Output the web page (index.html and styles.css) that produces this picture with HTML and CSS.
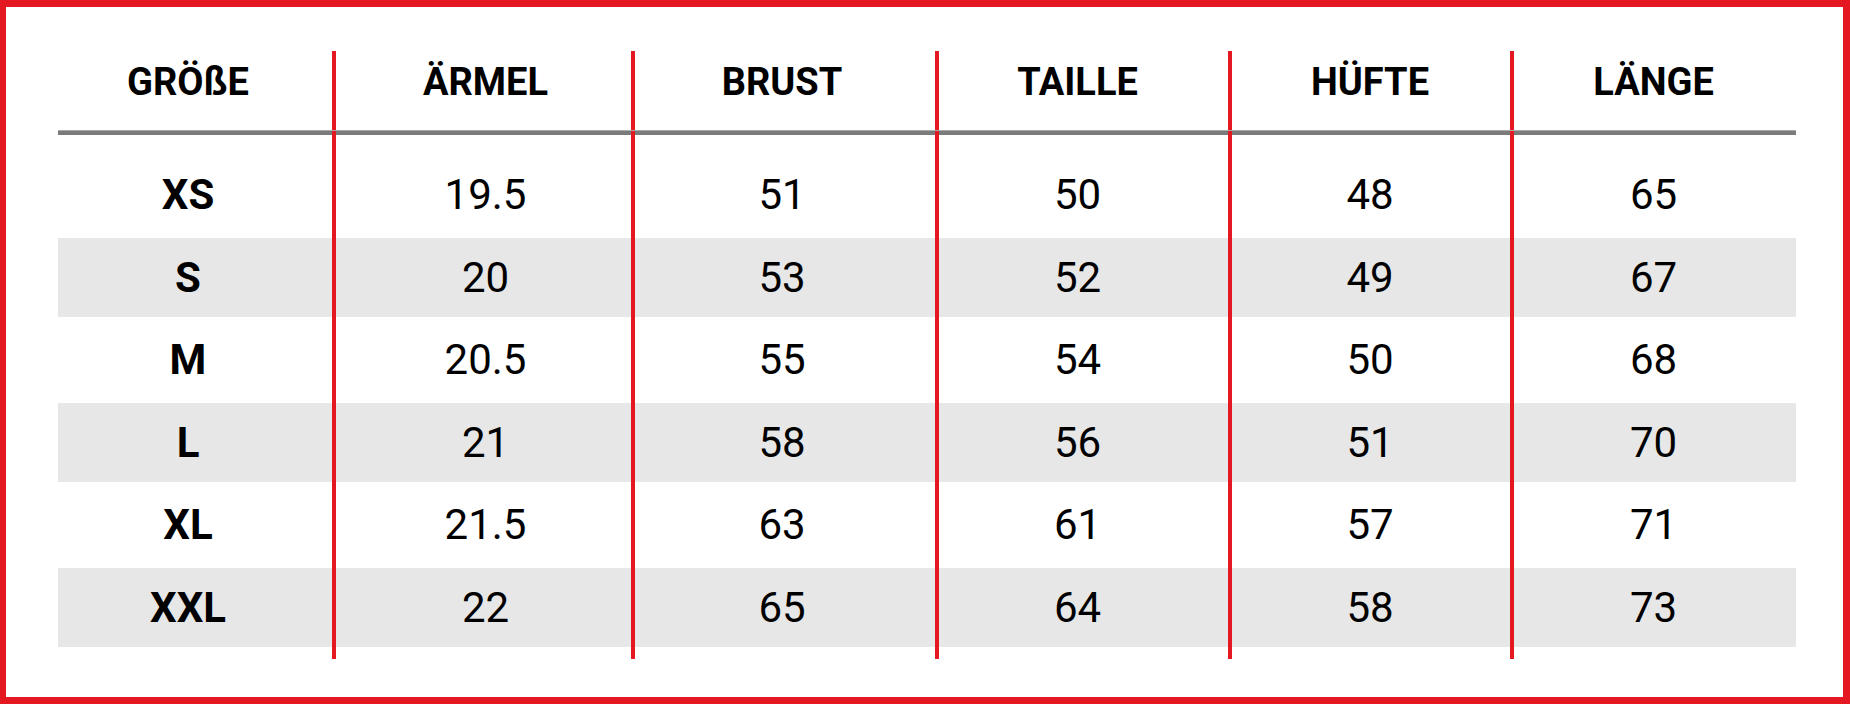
FILE: index.html
```html
<!DOCTYPE html>
<html lang="de">
<head>
<meta charset="utf-8">
<title>Größentabelle</title>
<link rel="stylesheet" href="styles.css">
</head>
<body>
<div class="frame">
  <div class="chart">
    <div class="row head">
      <div class="cell c1">GRÖßE</div>
      <div class="cell c2">ÄRMEL</div>
      <div class="cell c3">BRUST</div>
      <div class="cell c4">TAILLE</div>
      <div class="cell c5">HÜFTE</div>
      <div class="cell c6">LÄNGE</div>
    </div>
    <div class="row rule">
      <div class="cell c1"></div><div class="cell c2"></div><div class="cell c3"></div><div class="cell c4"></div><div class="cell c5"></div><div class="cell c6"></div>
    </div>
    <div class="row gap-top">
      <div class="cell c1"></div><div class="cell c2"></div><div class="cell c3"></div><div class="cell c4"></div><div class="cell c5"></div><div class="cell c6"></div>
    </div>
    <div class="row data">
      <div class="cell c1 size">XS</div><div class="cell c2">19.5</div><div class="cell c3">51</div><div class="cell c4">50</div><div class="cell c5">48</div><div class="cell c6">65</div>
    </div>
    <div class="row data alt">
      <div class="cell c1 size">S</div><div class="cell c2">20</div><div class="cell c3">53</div><div class="cell c4">52</div><div class="cell c5">49</div><div class="cell c6">67</div>
    </div>
    <div class="row data">
      <div class="cell c1 size">M</div><div class="cell c2">20.5</div><div class="cell c3">55</div><div class="cell c4">54</div><div class="cell c5">50</div><div class="cell c6">68</div>
    </div>
    <div class="row data alt">
      <div class="cell c1 size">L</div><div class="cell c2">21</div><div class="cell c3">58</div><div class="cell c4">56</div><div class="cell c5">51</div><div class="cell c6">70</div>
    </div>
    <div class="row data">
      <div class="cell c1 size">XL</div><div class="cell c2">21.5</div><div class="cell c3">63</div><div class="cell c4">61</div><div class="cell c5">57</div><div class="cell c6">71</div>
    </div>
    <div class="row data alt">
      <div class="cell c1 size">XXL</div><div class="cell c2">22</div><div class="cell c3">65</div><div class="cell c4">64</div><div class="cell c5">58</div><div class="cell c6">73</div>
    </div>
    <div class="row gap-bottom">
      <div class="cell c1"></div><div class="cell c2"></div><div class="cell c3"></div><div class="cell c4"></div><div class="cell c5"></div><div class="cell c6"></div>
    </div>
  </div>
</div>
</body>
</html>
```
FILE: styles.css
```css
* {
  box-sizing: border-box;
}

html, body {
  margin: 0;
  padding: 0;
  background: #ffffff;
}

body {
  font-family: Roboto, "Liberation Sans", Arial, sans-serif;
  color: #000000;
}

.frame {
  width: 1850px;
  height: 704px;
  border-style: solid;
  border-color: #e31820;
  border-width: 7px 7px 7px 6px;
  padding: 44px 0 0 52px;
  background: #ffffff;
}

.chart {
  width: 1738px;
  display: flex;
  flex-direction: column;
}

.row {
  display: grid;
  grid-template-columns: 274px 299px 304px 293px 282px 286px;
}

.cell {
  display: flex;
  align-items: center;
  justify-content: center;
  white-space: nowrap;
}

.c2, .c3, .c4, .c5, .c6 {
  border-left: 4px solid #e31820;
}

.c1 { padding-right: 14px; }
.c2 { padding-left: 4px; }
.c3 { padding-right: 6px; }
.c4 { padding-right: 12px; }
.c5 { padding-right: 2px; }
.c6 { padding-right: 3px; }

.head {
  height: 80px;
}

.head .cell {
  align-items: flex-start;
  padding-top: 12px;
  font-size: 38px;
  line-height: 1;
  font-weight: 700;
}

.rule {
  height: 4px;
  background: #7b7b7b;
  box-shadow: 0 -1px 0 #a9a9a9;
}

.gap-top {
  height: 17px;
}

.gap-bottom {
  height: 12px;
}

.data {
  height: 86px;
  font-size: 42px;
  line-height: 1;
  font-weight: 400;
}

.data.alt {
  height: 79px;
  background: #e7e7e7;
}

.size {
  font-weight: 700;
}
```
